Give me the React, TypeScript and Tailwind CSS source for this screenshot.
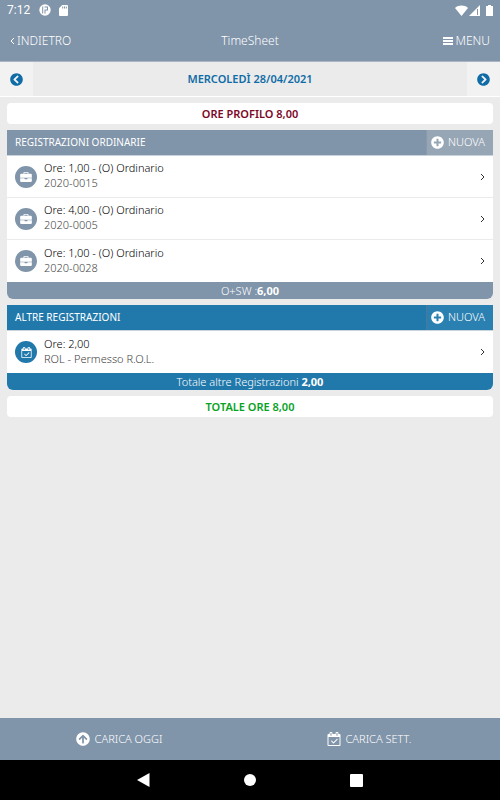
import type { ReactNode } from 'react'
import { FaArrowCircleUp, FaChevronCircleLeft, FaChevronCircleRight, FaPlusCircle } from 'react-icons/fa'

type Entry = { hours: string; detail: string }

const ordinary: Entry[] = [
  { hours: 'Ore: 1,00 - (O) Ordinario', detail: '2020-0015' },
  { hours: 'Ore: 4,00 - (O) Ordinario', detail: '2020-0005' },
  { hours: 'Ore: 1,00 - (O) Ordinario', detail: '2020-0028' },
]

const others: Entry[] = [{ hours: 'Ore: 2,00', detail: 'ROL - Permesso R.O.L.' }]

function CalendarCheck({ className }: { className: string }) {
  return (
    <svg viewBox="0 0 1664 1792" fill="currentColor" className={className} aria-hidden="true">
      <path d="M1303 964l-512 512q-10 9-23 9t-23-9l-288-288q-9-10-9-23t9-22l46-46q9-9 22-9t23 9l220 220 444-444q10-9 23-9t22 9l46 46q9 9 9 22t-9 23zm-1175 700h1408v-1024h-1408v1024zm384-1216v-288q0-14-9-23t-23-9h-64q-14 0-23 9t-9 23v288q0 14 9 23t23 9h64q14 0 23-9t9-23zm768 0v-288q0-14-9-23t-23-9h-64q-14 0-23 9t-9 23v288q0 14 9 23t23 9h64q14 0 23-9t9-23zm384-64v1280q0 52-38 90t-90 38h-1408q-52 0-90-38t-38-90v-1280q0-52 38-90t90-38h128v-96q0-66 47-113t113-47h64q66 0 113 47t47 113v96h384v-96q0-66 47-113t113-47h64q66 0 113 47t47 113v96h128q52 0 90 38t38 90z" />
    </svg>
  )
}

function Briefcase({ className }: { className: string }) {
  return (
    <svg viewBox="0 0 14 12" fill="currentColor" className={className} aria-hidden="true">
      <path d="M4 2V1a1 1 0 0 1 1-1h4a1 1 0 0 1 1 1v1h2.8A1.2 1.2 0 0 1 14 3.2V7H0V3.2A1.2 1.2 0 0 1 1.2 2zM5 2h4V1H5z" fillRule="evenodd" />
      <path d="M0 7.600h5.300v.6a.6.6 0 0 0 .6.6h2.200a.6.6 0 0 0 .6-.6v-.6H14v3.200a1.2 1.2 0 0 1-1.2 1.2H1.200A1.2 1.2 0 0 1 0 10.800z" />
    </svg>
  )
}

function Angle({ className }: { className: string }) {
  return (
    <svg viewBox="0 0 5 8" fill="none" stroke="currentColor" className={className} aria-hidden="true">
      <path d="M1 1l3 3-3 3" />
    </svg>
  )
}

function StatusBar() {
  return (
    <div className="flex h-5 items-center justify-between px-[7px] text-white">
      <div className="flex items-center">
        <span className="w-8 font-[Roboto] text-xs leading-5">7:12</span>
        <svg viewBox="0 0 12 12" className="size-3" aria-hidden="true">
          <circle cx="6" cy="6" r="5.7" fill="#fff" />
          <path d="M3.200 2.500h1v7h-1zM5.500 2.500h3.500v4H6.500v3h-1v-4H8v-2H5.500z" fill="#8094aa" />
        </svg>
        <svg viewBox="0 0 9 11" className="ml-2 h-[11px] w-[9px]" aria-hidden="true">
          <path d="M3.2 0H8a1 1 0 0 1 1 1v9a1 1 0 0 1-1 1H1a1 1 0 0 1-1-1V3.3z" fill="#fff" />
          <path d="M3.2 1.4h1v2h-1zM5 1.4h1v2H5zM6.8 1.4h1v2h-1z" fill="#8094aa" />
        </svg>
      </div>
      <div className="flex items-center">
        <svg viewBox="0 0 13 11" className="h-[11px] w-[13px]" aria-hidden="true">
          <path d="M6.5 11L0 3C3.500-.2 9.500-.2 13 3z" fill="#fff" />
        </svg>
        <svg viewBox="0 0 11 11" className="ml-px size-[11px]" aria-hidden="true">
          <path d="M11 0v11H0z" fill="#fff" />
          <path d="M8 4h1v6H8z" fill="#8094aa" />
        </svg>
        <svg viewBox="0 0 7 11" className="ml-1.5 h-[11px] w-[7px]" aria-hidden="true">
          <path d="M2 0h3v1h2v10H0V1h2z" fill="#fff" />
        </svg>
      </div>
    </div>
  )
}

function Banner({ color, children }: { color: string; children: ReactNode }) {
  return (
    <div className={`rounded-sm bg-white text-center text-[11px] leading-[21px] font-semibold ${color}`}>
      {children}
    </div>
  )
}

type PanelProps = {
  title: string
  tone: string
  buttonTone: string
  icon: ReactNode
  entries: Entry[]
  totalLabel: string
  total: string
}

function Panel({ title, tone, buttonTone, icon, entries, totalLabel, total }: PanelProps) {
  return (
    <section className="overflow-hidden rounded-b-md bg-white">
      <header className={`flex h-[26px] items-stretch justify-between border-b border-[#c9d3de] text-white ${tone}`}>
        <h2 className="pl-2 text-[10px] leading-[25px]">{title}</h2>
        <button className={`flex w-[67px] items-center gap-1 border-l pl-1 text-[11px] font-light ${buttonTone}`}>
          <FaPlusCircle className="size-[13px]" />
          NUOVA
        </button>
      </header>
      <ul>
        {entries.map((entry, i) => (
          <li key={i} className="h-[42px] border-b border-[#ebebeb] last:border-b-0">
            <button className="flex h-full w-full items-center px-2 text-left">
              <span className={`flex size-[22px] items-center justify-center rounded-full text-white ${tone}`}>
                {icon}
              </span>
              <span className="ml-[7px] flex-1 pb-[3px] text-[11px] leading-[15px] font-light">
                <span className="block text-black">{entry.hours}</span>
                <span className="block text-[#444]">{entry.detail}</span>
              </span>
              <Angle className="h-2 w-[5px] text-[#333]" />
            </button>
          </li>
        ))}
      </ul>
      <footer className={`text-center text-[11px] leading-[17px] font-light text-white ${tone}`}>
        {totalLabel}
        <b className="font-bold">{total}</b>
      </footer>
    </section>
  )
}

export default function App() {
  return (
    <div className="flex min-h-screen flex-col bg-[#ebebeb] font-['Noto_Sans',sans-serif]">
      <div className="border-b border-[#a9b5c2] bg-[#8094aa] text-white">
        <StatusBar />
        <header className="grid h-[41px] grid-cols-3 items-center px-2.5 text-xs font-light">
          <button className="flex items-center gap-0.5">
            <Angle className="h-2 w-[5px] rotate-180" />
            INDIETRO
          </button>
          <h1 className="text-center">TimeSheet</h1>
          <button className="flex items-center gap-0.5 justify-self-end">
            <svg viewBox="0 0 10 8" className="h-2 w-2.5" fill="currentColor" aria-hidden="true">
              <path d="M0 0h10v2H0zM0 3h10v2H0zM0 6h10v2H0z" />
            </svg>
            MENU
          </button>
        </header>
      </div>

      <nav className="flex h-[35px] items-stretch border-b border-white text-[#0f6ca6]">
        <button aria-label="Giorno precedente" className="flex w-[33px] items-center justify-center bg-[#f2f2f2]">
          <FaChevronCircleLeft className="size-[13px]" />
        </button>
        <div className="flex-1 text-center text-[11px] leading-[34px] font-semibold">MERCOLEDÌ 28/04/2021</div>
        <button aria-label="Giorno successivo" className="flex w-[33px] items-center justify-center bg-[#f2f2f2]">
          <FaChevronCircleRight className="size-[13px]" />
        </button>
      </nav>

      <main className="flex flex-1 flex-col gap-1.5 px-[7px] py-1.5">
        <Banner color="text-[#7c0727]">ORE PROFILO 8,00</Banner>
        <Panel
          title="REGISTRAZIONI ORDINARIE"
          tone="bg-[#8094aa]"
          buttonTone="bg-[#97a6b5] border-[#8999a9]"
          icon={<Briefcase className="h-2.5 w-3" />}
          entries={ordinary}
          totalLabel="O+SW :"
          total="6,00"
        />
        <Panel
          title="ALTRE REGISTRAZIONI"
          tone="bg-[#2179ab]"
          buttonTone="bg-[#2a80b0] border-[#4a7a98]"
          icon={<CalendarCheck className="size-[11px]" />}
          entries={others}
          totalLabel="Totale altre Registrazioni "
          total="2,00"
        />
        <Banner color="text-[#07a31f]">TOTALE ORE 8,00</Banner>
      </main>

      <div className="grid h-[42px] grid-cols-2 bg-[#8094aa] text-[11px] font-light text-white">
        <button className="flex items-center justify-center gap-[5px] pr-3">
          <FaArrowCircleUp className="size-3.5" />
          CARICA OGGI
        </button>
        <button className="flex items-center justify-center gap-[5px] pr-3">
          <CalendarCheck className="size-3.5" />
          CARICA SETT.
        </button>
      </div>

      <div className="flex h-10 items-center justify-center gap-[94px] bg-black text-white">
        <button aria-label="Indietro">
          <svg viewBox="0 0 13 14" className="h-3.5 w-[13px]" fill="currentColor">
            <path d="M12.5 0v14L0 7z" />
          </svg>
        </button>
        <button aria-label="Home" className="size-3 rounded-full bg-white" />
        <button aria-label="Recenti" className="size-[13px] rounded-[1px] bg-white" />
      </div>
    </div>
  )
}
